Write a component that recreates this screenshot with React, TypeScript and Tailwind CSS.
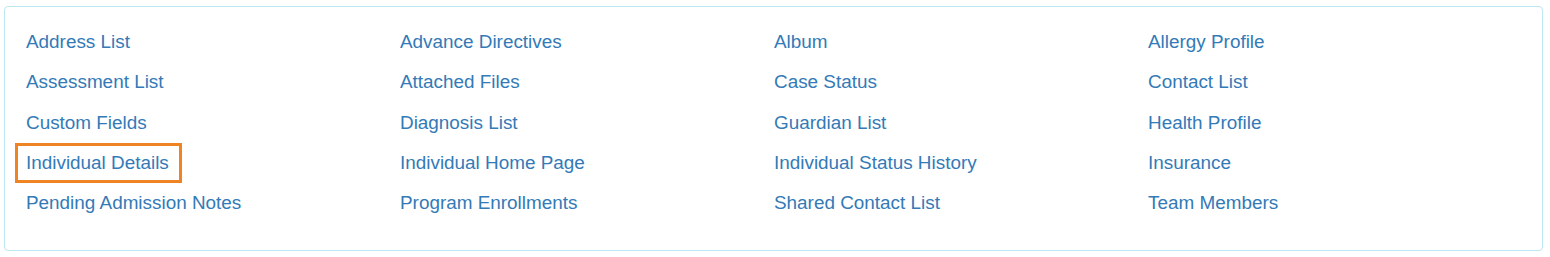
const columns: string[][] = [
  ['Address List', 'Assessment List', 'Custom Fields', 'Individual Details', 'Pending Admission Notes'],
  ['Advance Directives', 'Attached Files', 'Diagnosis List', 'Individual Home Page', 'Program Enrollments'],
  ['Album', 'Case Status', 'Guardian List', 'Individual Status History', 'Shared Contact List'],
  ['Allergy Profile', 'Contact List', 'Health Profile', 'Insurance', 'Team Members'],
]

const highlighted = 'Individual Details'

export default function App() {
  return (
    <div className="h-[257px] w-[1550px] bg-white pl-[4px] pr-[7px] pt-[6px]" style={{ fontFamily: '"Liberation Sans", Arial, sans-serif' }}>
      <div className="h-[245px] rounded-[4px] border border-[#bce8f1] bg-white pl-[21px] pr-[20px] pt-[15px]">
        <div className="grid grid-cols-4">
          {columns.map((col, ci) => (
            <ul key={ci} className="flex flex-col">
              {col.map((label) => (
                <li key={label} className="flex h-[40.25px] items-center">
                  <a href="#" className="relative text-[18.9px] leading-[20px] text-[#337ab7]">
                    {label}
                    {label === highlighted && (
                      <span className="pointer-events-none absolute -left-[11px] -right-[13px] -top-[10px] -bottom-[10px] border-[3px] border-[#ef8424]" />
                    )}
                  </a>
                </li>
              ))}
            </ul>
          ))}
        </div>
      </div>
    </div>
  )
}
